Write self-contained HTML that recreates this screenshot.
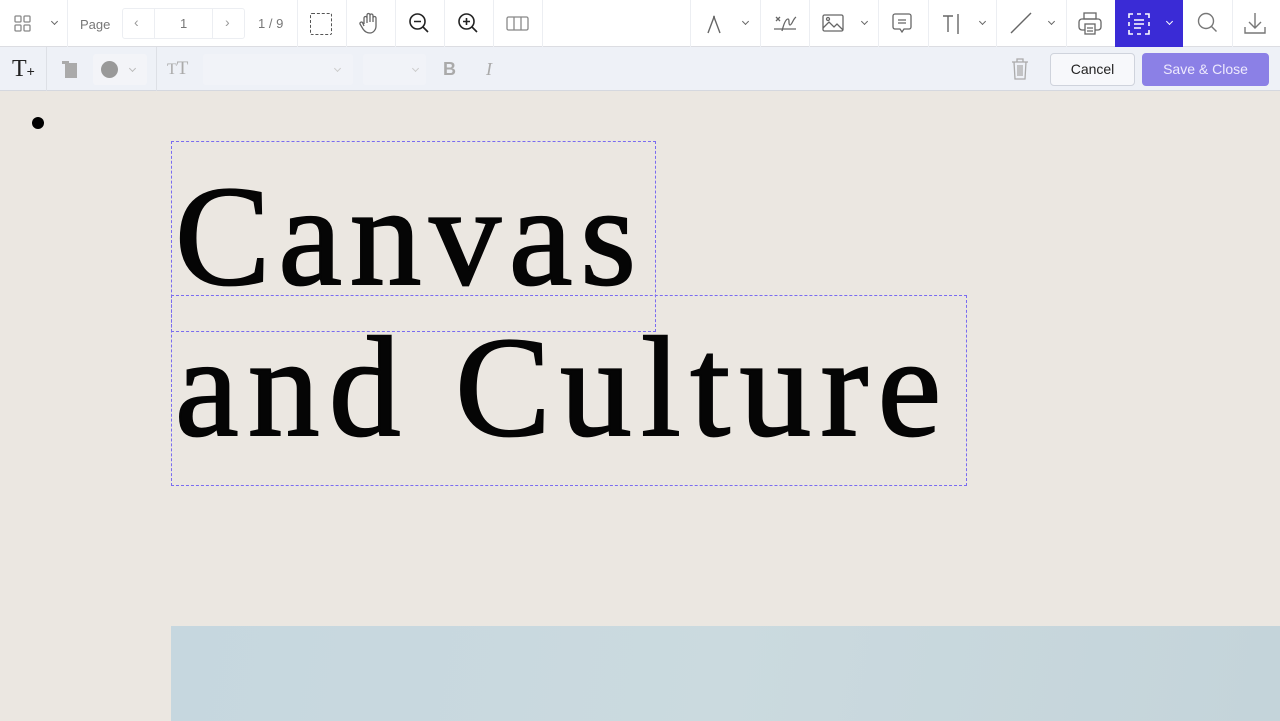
<!DOCTYPE html>
<html><head><meta charset="utf-8"><style>
*{margin:0;padding:0;box-sizing:border-box}
body{width:1280px;height:721px;overflow:hidden;background:#ebe7e1;font-family:"Liberation Sans",sans-serif;position:relative}
.tb{position:absolute;left:0;top:0;width:1280px;height:47px;background:#fff;border-bottom:1px solid #dcdde2}
.tb2{position:absolute;left:0;top:47px;width:1280px;height:44px;background:#eef1f7;border-bottom:1px solid #d5d8df}
.dv{position:absolute;top:0;width:1px;height:47px;background:#eceef2}
.ab{position:absolute}
svg{position:absolute;overflow:visible}
.chev{position:absolute;width:5px;height:5px;border-right:1.4px solid #666;border-bottom:1.4px solid #666;transform:rotate(45deg)}
.box{position:absolute;border:1px dashed #7a6cf0}
.t{position:absolute;font-family:"Liberation Serif",serif;font-size:143px;color:#050505;line-height:1;white-space:nowrap;-webkit-text-stroke:2px #050505}
</style></head><body>
<div class="tb">
 <svg style="left:14px;top:15px" width="18" height="18" fill="none" stroke="#888" stroke-width="1.3"><rect x="1" y="1" width="6" height="6" rx="1"/><rect x="10" y="1" width="6" height="6" rx="1"/><rect x="1" y="10" width="6" height="6" rx="1"/><rect x="10" y="10" width="6" height="6" rx="1"/></svg>
 <div class="chev" style="left:52px;top:19px"></div>
 <div class="dv" style="left:67px"></div>
 <div class="ab" style="left:80px;top:17px;font-size:13px;color:#777">Page</div>
 <div class="ab" style="left:122px;top:8px;width:123px;height:31px;border:1px solid #eceef2;border-radius:3px"></div>
 <div class="ab" style="left:154px;top:8px;width:1px;height:31px;background:#eceef2"></div>
 <div class="ab" style="left:212px;top:8px;width:1px;height:31px;background:#eceef2"></div>
 <div class="ab" style="left:134px;top:14px;font-size:14px;color:#999">‹</div>
 <div class="ab" style="left:180px;top:16px;font-size:13px;color:#777">1</div>
 <div class="ab" style="left:225px;top:14px;font-size:14px;color:#999">›</div>
 <div class="ab" style="left:258px;top:16px;font-size:13px;color:#777">1 / 9</div>
 <div class="dv" style="left:297px"></div>
 <div class="ab" style="left:310px;top:13px;width:22px;height:22px;border:1.5px dashed #555;border-radius:2px"></div>
 <div class="dv" style="left:346px"></div>
 <svg style="left:359px;top:12px" width="22" height="24" fill="none" stroke="#666" stroke-width="1.3"><path d="M5 12V6a1.5 1.5 0 013 0v5M8 10V3a1.5 1.5 0 013 0v7M11 10V3.5a1.5 1.5 0 013 0V10M14 10V6a1.5 1.5 0 013 0v8c0 4-3 7-6 7s-5-1-7-4l-3-5a1.5 1.5 0 012.5-1.5L5 14"/></svg>
 <div class="dv" style="left:395px"></div>
 <svg style="left:408px;top:12px" width="24" height="24" fill="none" stroke="#222" stroke-width="1.6"><circle cx="9.5" cy="9.5" r="7.5"/><path d="M15 15l5 5M6 9.5h7"/></svg>
 <div class="dv" style="left:444px"></div>
 <svg style="left:457px;top:12px" width="24" height="24" fill="none" stroke="#222" stroke-width="1.6"><circle cx="9.5" cy="9.5" r="7.5"/><path d="M15 15l5 5M6 9.5h7M9.5 6v7"/></svg>
 <div class="dv" style="left:493px"></div>
 <svg style="left:506px;top:16px" width="24" height="16" fill="none" stroke="#888" stroke-width="1.3"><rect x="1" y="1" width="21" height="13" rx="1.5"/><path d="M8 1v13M15 1v13"/></svg>
 <div class="dv" style="left:542px"></div>

 <div class="dv" style="left:690px"></div>
 <svg style="left:706px;top:13px" width="18" height="22" fill="none" stroke="#666" stroke-width="1.4"><path d="M2 20L8 4l6 16M7 4h2"/></svg>
 <div class="chev" style="left:743px;top:19px"></div>
 <div class="dv" style="left:760px"></div>
 <svg style="left:772px;top:11px" width="26" height="26" fill="none" stroke="#666" stroke-width="1.3"><path d="M2 18h22M4 6l4 4M8 6l-4 4M10 20c2-8 4-12 6-12s0 6 2 6 3-6 6-8"/></svg>
 <div class="dv" style="left:809px"></div>
 <svg style="left:822px;top:14px" width="22" height="18" fill="none" stroke="#666" stroke-width="1.3"><rect x="1" y="1" width="20" height="16" rx="1.5"/><path d="M1 14l6-6 5 5 3-3 6 6"/><circle cx="6" cy="5" r="1.5"/></svg>
 <div class="chev" style="left:862px;top:19px"></div>
 <div class="dv" style="left:878px"></div>
 <svg style="left:892px;top:13px" width="20" height="22" fill="none" stroke="#666" stroke-width="1.3"><path d="M3 1h14a2 2 0 012 2v11a2 2 0 01-2 2h-5l-2 3-2-3H3a2 2 0 01-2-2V3a2 2 0 012-2zM6 7h8M6 10h8"/></svg>
 <div class="dv" style="left:928px"></div>
 <svg style="left:942px;top:13px" width="20" height="22" fill="none" stroke="#666" stroke-width="1.4"><path d="M1 3h10M6 3v16M16 1v20"/></svg>
 <div class="chev" style="left:980px;top:19px"></div>
 <div class="dv" style="left:996px"></div>
 <svg style="left:1010px;top:12px" width="22" height="22" fill="none" stroke="#666" stroke-width="1.4"><path d="M1 21L21 1"/></svg>
 <div class="chev" style="left:1049px;top:19px"></div>
 <div class="dv" style="left:1066px"></div>
 <svg style="left:1078px;top:12px" width="24" height="24" fill="none" stroke="#666" stroke-width="1.3"><rect x="6" y="1" width="12" height="6"/><rect x="1" y="7" width="22" height="11" rx="3"/><rect x="7" y="12" width="10" height="10" fill="#fff"/><path d="M9 16h6M9 19h6"/></svg>
 <div class="ab" style="left:1115px;top:0;width:68px;height:47px;background:#3a2bd6"></div>
 <svg style="left:1128px;top:13px" width="22" height="22" fill="none" stroke="#fff" stroke-width="1.6"><path d="M1 5V1h4M17 1h4v4M21 17v4h-4M5 21H1v-4M1 9v4M21 9v4M9 1h4M9 21h4M6 7h10M6 11h10M6 15h7"/></svg>
 <div class="chev" style="left:1167px;top:19px;border-color:#fff"></div>
 <svg style="left:1197px;top:12px" width="22" height="22" fill="none" stroke="#777" stroke-width="1.4"><circle cx="9" cy="9" r="7.5"/><path d="M14.5 14.5l5 5"/></svg>
 <div class="dv" style="left:1232px"></div>
 <svg style="left:1243px;top:12px" width="24" height="24" fill="none" stroke="#777" stroke-width="1.4"><path d="M12 1v14M6 10l6 6 6-6M2 15v6h20v-6"/></svg>
</div>
<div class="tb2">
 <div class="ab" style="left:12px;top:9px;font-family:'Liberation Serif',serif;font-size:24px;color:#222">T<span style="font-size:14px;font-family:'Liberation Sans'">+</span></div>
 <div class="ab" style="left:46px;top:0;width:1px;height:44px;background:#dde0e6"></div>
 <div class="ab" style="left:62px;top:14px;width:7px;height:3px;background:#aaa"></div>
 <div class="ab" style="left:65px;top:16px;width:12px;height:15px;background:#aaa"></div>
 <div class="ab" style="left:93px;top:7px;width:54px;height:31px;background:#f3f4f8;border-radius:3px"></div>
 <div class="ab" style="left:101px;top:14px;width:17px;height:17px;border-radius:50%;background:#999"></div>
 <div class="chev" style="left:130px;top:19px;border-color:#bbb"></div>
 <div class="ab" style="left:156px;top:0;width:1px;height:44px;background:#dde0e6"></div>
 <div class="ab" style="left:167px;top:11px;font-family:'Liberation Serif',serif;font-size:16px;color:#aaa">T<span style="font-size:19px">T</span></div>
 <div class="ab" style="left:203px;top:7px;width:150px;height:31px;background:#f1f3f8;border-radius:3px"></div>
 <div class="chev" style="left:335px;top:19px;border-color:#ccc"></div>
 <div class="ab" style="left:363px;top:7px;width:63px;height:31px;background:#f1f3f8;border-radius:3px"></div>
 <div class="chev" style="left:413px;top:19px;border-color:#ccc"></div>
 <div class="ab" style="left:443px;top:12px;font-size:18px;font-weight:bold;color:#aaa">B</div>
 <div class="ab" style="left:486px;top:12px;font-family:'Liberation Serif',serif;font-style:italic;font-size:18px;color:#aaa">I</div>
 <svg style="left:1011px;top:10px" width="18" height="24" fill="none" stroke="#aaa" stroke-width="1.3"><path d="M1 5h16M6 5V2h6v3M3 5l1 17h10l1-17M7 8v11M9 8v11M11 8v11"/></svg>
 <div class="ab" style="left:1050px;top:6px;width:85px;height:33px;background:#f7f8fb;border:1px solid #cfd3dc;border-radius:4px;font-size:14px;color:#222;text-align:center;line-height:31px">Cancel</div>
 <div class="ab" style="left:1142px;top:6px;width:127px;height:33px;background:#8b80e6;border-radius:4px;font-size:14px;color:#eeeafd;text-align:center;line-height:33px">Save &amp; Close</div>
</div>

<div class="ab" style="left:32px;top:117px;width:12px;height:12px;border-radius:50%;background:#000"></div>
<div class="box" style="left:171px;top:141px;width:485px;height:191px"></div>
<div class="box" style="left:171px;top:295px;width:796px;height:191px"></div>
<div class="t" style="left:175px;top:165px;letter-spacing:8px">Canvas</div>
<div class="t" style="left:175px;top:316px;letter-spacing:9.5px">and Culture</div>
<div class="ab" style="left:171px;top:626px;width:1109px;height:95px;background:linear-gradient(100deg,#c6d7df,#cbdadf 50%,#c4d4da)"></div>
</body></html>
